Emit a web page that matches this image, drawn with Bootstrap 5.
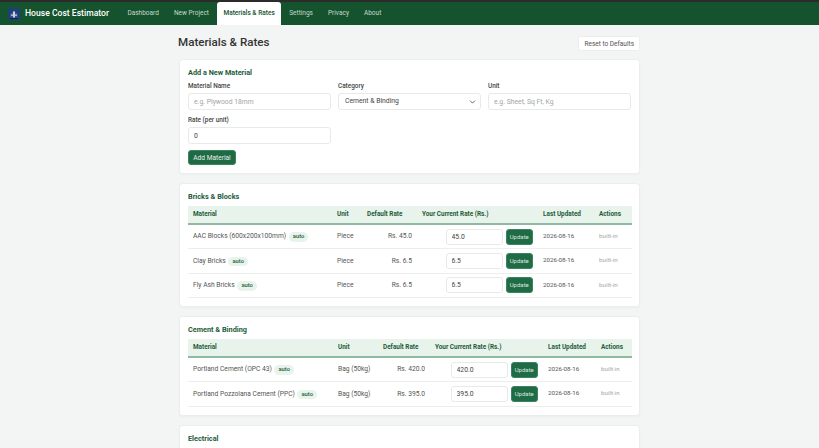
<!DOCTYPE html>
<html lang="en">
<head>
  <meta charset="UTF-8" />
  <meta name="viewport" content="width=device-width, initial-scale=1.0"/>
  <title>Materials &amp; Rates</title>
  <link href="https://cdn.jsdelivr.net/npm/bootstrap@5.3.2/dist/css/bootstrap.min.css" rel="stylesheet"/>
  <style>
    html, body { overflow: hidden; }
    body {
      font-family: Roboto, "Noto Sans", sans-serif;
      font-size: 6.5px;
      background-color: #f3f5f4;
      color: #444;
    }
    .top-bar {
      background-color: #14532d;
      border-top: 2px solid #2b2b2b;
      height: 25px;
      padding: 0 8px;
    }
    .brand-name { color: #fff; font-size: 8.6px; font-weight: 500; margin-left: 5px; margin-right: 11px; }
    .top-link {
      color: #c6d8cc;
      font-size: 6.5px;
      padding: 0 7.500px;
      height: 23px;
      line-height: 22px;
      text-decoration: none;
      border-radius: 3px 3px 0 0;
    }
    .top-link.current { background: #fff; color: #14532d; font-weight: 500; padding: 0 6px; margin: 0 1px; }
    .page-wrap { width: 461px; margin: 0 auto; }
    .page-head { height: 34px; padding-top: 11px; }
    .page-title { font-size: 11.6px; font-weight: 500; color: #333; margin: 0 0 0 -1px; }
    .reset-btn {
      background: #fff;
      border: 1px solid #eceeed;
      border-radius: 2.5px;
      color: #555;
      font-size: 6.5px;
      padding: 0 5px;
      height: 15px;
      line-height: 12px;
    }
    .panel {
      background: #fff;
      border: 1px solid #ebeeec;
      border-radius: 3.5px;
      padding: 7px 8px 8px;
      margin-bottom: 9px;
      box-shadow: 0 1px 2px rgba(0,0,0,.03);
    }
    .panel-title { font-size: 7.3px; font-weight: 700; color: #1e5c3a; margin: 0; line-height: 11px; }
    .form-grid { --bs-gutter-x: 7px; --bs-gutter-y: 0; margin-top: 4px; }
    .second-line { margin-top: 6px; }
    .field-label { display: block; font-size: 6.4px; font-weight: 500; color: #444; line-height: 9px; margin-bottom: 2px; }
    .field-box {
      display: block;
      width: 100%;
      height: 17px;
      border: 1px solid #e8eae9;
      border-radius: 3px;
      background-color: #fff;
      font-size: 6.8px;
      color: #444;
      padding: 0 5px;
    }
    .field-box::placeholder { color: #a2a5a4; }
    select.field-box.form-select {
      padding: 0 12px 0 6px;
      border: 1px solid #e8eae9;
      border-radius: 3px;
      background-position: right 4px center;
      background-size: 7px 6px;
      font-size: 6.8px;
      color: #444;
    }
    .add-btn {
      background: #1f6b45;
      color: #e8f0eb;
      border: 1px solid #3a8460;
      border-radius: 3px;
      font-size: 6.6px;
      height: 15px;
      width: 48px;
      padding: 0;
      line-height: 12px;
      margin-top: 6px;
    }
    .add-btn:hover { background: #1f6b45; color: #e8f0eb; }
    .rate-table { width: 100%; table-layout: fixed; border-collapse: collapse; margin-top: 4px; margin-bottom: 0; }
    .rate-table th {
      background: #e8f3ec;
      color: #1e5c3a;
      font-size: 6.4px;
      font-weight: 700;
      height: 18px;
      padding: 0 5px;
      border-bottom: 2px solid #8fb9a0;
      white-space: nowrap;
    }
    .rate-table td {
      height: 24.5px;
      padding: 0 5px;
      font-size: 6.7px;
      color: #555;
      border-bottom: 1px solid #eceeed;
      vertical-align: middle;
      white-space: nowrap;
    }
    .rate-table td.money { text-align: right; }
    .rate-table td.muted-cell { color: #a5a8a6; font-size: 6.2px; }
    .rate-table td.date-cell { font-size: 6.2px; }
    .auto-tag {
      display: inline-block;
      background: #e8f3ec;
      color: #1e5c3a;
      font-size: 5.8px;
      font-weight: 500;
      line-height: 9.5px;
      border-radius: 5px;
      padding: 0 4px;
      margin-left: 1px;
    }
    .rate-form { display: flex; justify-content: flex-end; gap: 2.5px; }
    .rate-input {
      width: 57.5px;
      height: 16px;
      border: 1px solid #e8eae9;
      border-radius: 3px;
      font-size: 6.8px;
      color: #444;
      padding: 0 5px;
    }
    .update-btn {
      background: #1f6b45;
      color: #d9e7df;
      border: 1px solid #3a8460;
      border-radius: 3px;
      font-size: 6px;
      width: 27.5px;
      height: 16px;
      padding: 0;
      line-height: 12px;
    }
    .update-btn:hover { background: #1f6b45; color: #d9e7df; }
    .a1 { width: 144px; } .a2 { width: 30px; } .a3 { width: 55px; } .a4 { width: 121px; } .a5 { width: 56px; } .a6 { width: 38px; }
    .b1 { width: 145px; } .b2 { width: 45px; } .b3 { width: 52px; } .b4 { width: 113px; } .b5 { width: 53px; } .b6 { width: 36px; }
  </style>
</head>
<body>
  <!-- Top bar -->
  <nav class="top-bar d-flex align-items-center">
    <svg width="12" height="12" viewBox="0 0 12 12" aria-hidden="true">
      <rect width="12" height="12" rx="1.5" fill="#1d3f7a"/>
      <path d="M2 6 6 2.500 10 6V10H2Z" fill="#35507f"/>
      <path d="M5 3.500h2v3h2v1.200H7V9.500H5V7.700H3V6.500h2Z" fill="#c9d3e0"/>
      <rect x="2" y="10" width="8" height="1" fill="#0e2347"/>
    </svg>
    <span class="brand-name">House Cost Estimator</span>
    <a class="top-link" href="#">Dashboard</a>
    <a class="top-link" href="#">New Project</a>
    <a class="top-link current" href="#">Materials &amp; Rates</a>
    <a class="top-link" href="#">Settings</a>
    <a class="top-link" href="#">Privacy</a>
    <a class="top-link" href="#">About</a>
  </nav>

  <main class="page-wrap">
    <div class="page-head d-flex justify-content-between align-items-start">
      <h1 class="page-title">Materials &amp; Rates</h1>
      <button class="btn reset-btn" type="button">Reset to Defaults</button>
    </div>

    <!-- Add form -->
    <section class="panel">
      <h2 class="panel-title">Add a New Material</h2>
      <div class="row form-grid">
        <div class="col-4">
          <label class="field-label">Material Name</label>
          <input class="field-box" type="text" placeholder="e.g. Plywood 18mm"/>
        </div>
        <div class="col-4">
          <label class="field-label">Category</label>
          <select class="form-select field-box">
            <option>Cement &amp; Binding</option>
          </select>
        </div>
        <div class="col-4">
          <label class="field-label">Unit</label>
          <input class="field-box" type="text" placeholder="e.g. Sheet, Sq Ft, Kg"/>
        </div>
        <div class="col-4 second-line">
          <label class="field-label">Rate (per unit)</label>
          <input class="field-box" type="text" value="0"/>
        </div>
      </div>
      <button class="btn add-btn" type="button">Add Material</button>
    </section>

    <!-- Bricks -->
    <section class="panel">
      <h2 class="panel-title">Bricks &amp; Blocks</h2>
      <table class="rate-table">
        <colgroup><col class="a1"/><col class="a2"/><col class="a3"/><col class="a4"/><col class="a5"/><col class="a6"/></colgroup>
        <thead>
          <tr><th>Material</th><th>Unit</th><th>Default Rate</th><th>Your Current Rate (Rs.)</th><th>Last Updated</th><th>Actions</th></tr>
        </thead>
        <tbody>
          <tr>
            <td>AAC Blocks (600x200x100mm) <span class="auto-tag">auto</span></td><td>Piece</td><td class="money">Rs. 45.0</td>
            <td><div class="rate-form"><input class="rate-input" value="45.0"/><button class="btn update-btn" type="button">Update</button></div></td>
            <td class="date-cell">2026-08-16</td><td class="muted-cell">built-in</td>
          </tr>
          <tr>
            <td>Clay Bricks <span class="auto-tag">auto</span></td><td>Piece</td><td class="money">Rs. 6.5</td>
            <td><div class="rate-form"><input class="rate-input" value="6.5"/><button class="btn update-btn" type="button">Update</button></div></td>
            <td class="date-cell">2026-08-16</td><td class="muted-cell">built-in</td>
          </tr>
          <tr>
            <td>Fly Ash Bricks <span class="auto-tag">auto</span></td><td>Piece</td><td class="money">Rs. 6.5</td>
            <td><div class="rate-form"><input class="rate-input" value="6.5"/><button class="btn update-btn" type="button">Update</button></div></td>
            <td class="date-cell">2026-08-16</td><td class="muted-cell">built-in</td>
          </tr>
        </tbody>
      </table>
    </section>

    <!-- Cement -->
    <section class="panel">
      <h2 class="panel-title">Cement &amp; Binding</h2>
      <table class="rate-table">
        <colgroup><col class="b1"/><col class="b2"/><col class="b3"/><col class="b4"/><col class="b5"/><col class="b6"/></colgroup>
        <thead>
          <tr><th>Material</th><th>Unit</th><th>Default Rate</th><th>Your Current Rate (Rs.)</th><th>Last Updated</th><th>Actions</th></tr>
        </thead>
        <tbody>
          <tr>
            <td>Portland Cement (OPC 43) <span class="auto-tag">auto</span></td><td>Bag (50kg)</td><td class="money">Rs. 420.0</td>
            <td><div class="rate-form"><input class="rate-input" value="420.0"/><button class="btn update-btn" type="button">Update</button></div></td>
            <td class="date-cell">2026-08-16</td><td class="muted-cell">built-in</td>
          </tr>
          <tr>
            <td>Portland Pozzolana Cement (PPC) <span class="auto-tag">auto</span></td><td>Bag (50kg)</td><td class="money">Rs. 395.0</td>
            <td><div class="rate-form"><input class="rate-input" value="395.0"/><button class="btn update-btn" type="button">Update</button></div></td>
            <td class="date-cell">2026-08-16</td><td class="muted-cell">built-in</td>
          </tr>
        </tbody>
      </table>
    </section>

    <!-- Electrical -->
    <section class="panel">
      <h2 class="panel-title">Electrical</h2>
      <table class="rate-table">
        <colgroup><col class="b1"/><col class="b2"/><col class="b3"/><col class="b4"/><col class="b5"/><col class="b6"/></colgroup>
        <thead>
          <tr><th>Material</th><th>Unit</th><th>Default Rate</th><th>Your Current Rate (Rs.)</th><th>Last Updated</th><th>Actions</th></tr>
        </thead>
      </table>
    </section>
  </main>

  <script src="https://cdn.jsdelivr.net/npm/bootstrap@5.3.2/dist/js/bootstrap.bundle.min.js"></script>
</body>
</html>
